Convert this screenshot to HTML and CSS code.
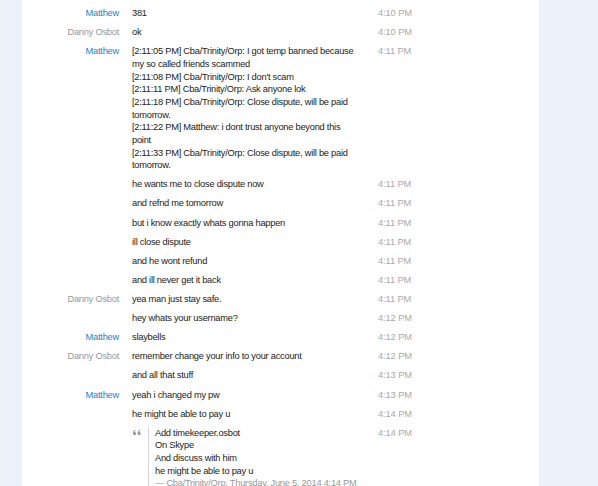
FILE: index.html
```html
<!DOCTYPE html>
<html>
<head>
<meta charset="utf-8">
<link rel="stylesheet" href="styles.css">
</head>
<body>
<div class="page">
  <div class="side"></div>
  <div class="chat">
    <div class="row"><div class="name me">Matthew</div><div class="msg">381</div><div class="time">4:10 PM</div></div>
    <div class="row"><div class="name other">Danny Osbot</div><div class="msg">ok</div><div class="time">4:10 PM</div></div>
    <div class="row"><div class="name me">Matthew</div><div class="msg">[2:11:05 PM] Cba/Trinity/Orp: I got temp banned because my so called friends scammed<br>[2:11:08 PM] Cba/Trinity/Orp: I don't scam<br>[2:11:11 PM] Cba/Trinity/Orp: Ask anyone lok<br>[2:11:18 PM] Cba/Trinity/Orp: Close dispute, will be paid tomorrow.<br>[2:11:22 PM] Matthew: i dont trust anyone beyond this point<br>[2:11:33 PM] Cba/Trinity/Orp: Close dispute, will be paid tomorrow.</div><div class="time">4:11 PM</div></div>
    <div class="row"><div class="name"></div><div class="msg">he wants me to close dispute now</div><div class="time">4:11 PM</div></div>
    <div class="row"><div class="name"></div><div class="msg">and refnd me tomorrow</div><div class="time">4:11 PM</div></div>
    <div class="row"><div class="name"></div><div class="msg">but i know exactly whats gonna happen</div><div class="time">4:11 PM</div></div>
    <div class="row"><div class="name"></div><div class="msg">ill close dispute</div><div class="time">4:11 PM</div></div>
    <div class="row"><div class="name"></div><div class="msg">and he wont refund</div><div class="time">4:11 PM</div></div>
    <div class="row"><div class="name"></div><div class="msg">and ill never get it back</div><div class="time">4:11 PM</div></div>
    <div class="row"><div class="name other">Danny Osbot</div><div class="msg">yea man just stay safe.</div><div class="time">4:11 PM</div></div>
    <div class="row"><div class="name"></div><div class="msg">hey whats your username?</div><div class="time">4:12 PM</div></div>
    <div class="row"><div class="name me">Matthew</div><div class="msg">slaybells</div><div class="time">4:12 PM</div></div>
    <div class="row"><div class="name other">Danny Osbot</div><div class="msg">remember change your info to your account</div><div class="time">4:12 PM</div></div>
    <div class="row"><div class="name"></div><div class="msg">and all that stuff</div><div class="time">4:13 PM</div></div>
    <div class="row"><div class="name me">Matthew</div><div class="msg">yeah i changed my pw</div><div class="time">4:13 PM</div></div>
    <div class="row"><div class="name"></div><div class="msg">he might be able to pay u</div><div class="time">4:14 PM</div></div>
    <div class="row"><div class="name"></div><div class="msg quote-wrap"><svg class="qmark" width="8" height="6" viewBox="0 0 8 6"><path d="M0 3.2 C0 1.4 1 0.3 2.6 0 L2.9 0.6 C2 0.9 1.6 1.4 1.5 2 C2.5 2 3.1 2.6 3.1 3.6 C3.1 4.6 2.5 5.2 1.6 5.2 C0.6 5.2 0 4.4 0 3.2 Z M4.6 3.2 C4.6 1.4 5.6 0.3 7.2 0 L7.5 0.6 C6.6 0.9 6.2 1.4 6.1 2 C7.1 2 7.7 2.6 7.7 3.6 C7.7 4.6 7.1 5.2 6.2 5.2 C5.2 5.2 4.6 4.4 4.6 3.2 Z" fill="#999"/></svg><div class="quote">Add timekeeper.osbot<br>On Skype<br>And discuss with him<br>he might be able to pay u<div class="attr">— Cba/Trinity/Orp, Thursday, June 5, 2014 4:14 PM</div></div></div><div class="time">4:14 PM</div></div>
  </div>
  <div class="side"></div>
</div>
</body>
</html>
```
FILE: styles.css
```css
html, body { margin: 0; padding: 0; }
body { background: #edf1f9; font-family: "Liberation Sans", Arial, sans-serif; font-size: 9.3px; letter-spacing: -0.25px; color: #222; }
.page { display: flex; height: 486px; overflow: hidden; }
.side { flex: 0 0 22px; background: #edf1f9; }
.side:last-child { flex: 1 1 auto; }
.chat { flex: 0 0 517px; background: #fff; padding-top: 7px; }
.row { display: flex; padding: 0 0 6.45px; line-height: 12.67px; }
.name { flex: 0 0 97px; text-align: right; }
.me { color: #1e83d0; }
.other { color: #999; }
.msg { flex: 0 0 226px; min-width: 0; margin-left: 13px; }
.time { margin-left: 20px; color: #a8a8a8; letter-spacing: -0.1px; }
.quote-wrap { display: flex; align-items: flex-start; }
.qmark { flex: 0 0 8px; margin: 3px 7px 0 1px; }
.quote { border-left: 1px solid #d6d6d6; padding-left: 6px; white-space: nowrap; }
.attr { color: #999; }
```
